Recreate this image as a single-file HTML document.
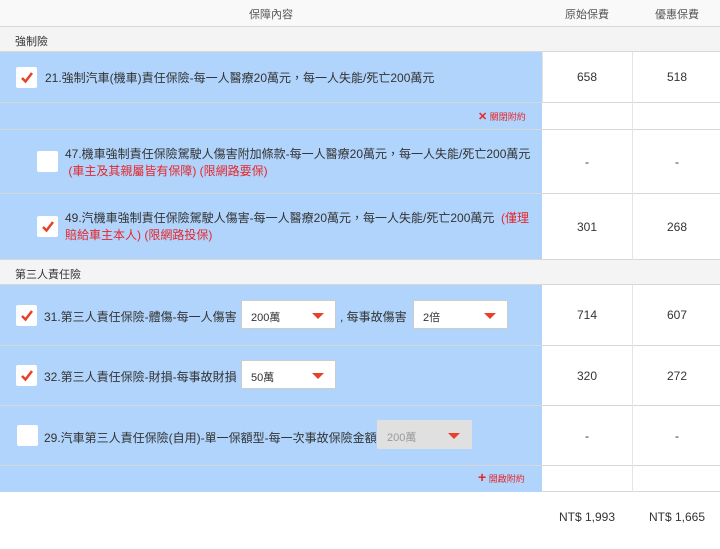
<!DOCTYPE html><html><head><meta charset="utf-8"><style>
*{box-sizing:border-box;margin:0;padding:0}
body{width:720px;height:549px;background:#fff;font-family:"Liberation Sans","Noto Sans CJK TC",sans-serif;font-size:12px;color:#333;position:relative;overflow:hidden}
.a{position:absolute}
.blue{background:#b0d4fb}
.gray{background:#f4f4f4}
.bl{border-bottom:1px solid #d8d8d8}
.num{position:absolute;width:90px;text-align:center}
.cb{position:absolute;width:21px;height:21px;background:#fff;border-radius:2px}
.cb svg{position:absolute;left:4px;top:4px}
.sel{position:absolute;height:29px;background:#fff;border:1px solid #ccc;font-size:11px;padding:8px 0 0 9px}
.sel:after{content:"";position:absolute;right:11px;top:12px;border-left:6px solid transparent;border-right:6px solid transparent;border-top:6px solid #e8402a}
.red{color:#e8252a}
.vl{position:absolute;left:632px;width:1px;background:#e4e4e4}
</style></head><body>
<div class="a gray bl" style="left:0;top:0;width:720px;height:27px;background:#f9f9f9"></div>
<div class="a" style="left:0;top:6px;width:542px;text-align:center;font-size:11px;color:#555">保障內容</div>
<div class="num" style="left:542px;top:6px;font-size:11px;color:#555">原始保費</div>
<div class="num" style="left:632px;top:6px;font-size:11px;color:#555">優惠保費</div>

<div class="a gray bl" style="left:0;top:27px;width:720px;height:25px"></div>
<div class="a" style="left:15px;top:33px;font-size:11px">強制險</div>

<div class="a blue bl" style="left:0;top:52px;width:542px;height:51px"></div>
<div class="a bl" style="left:542px;top:52px;width:178px;height:51px;border-left:1px solid #e4e4e4"></div>
<div class="cb" style="left:16px;top:67px"><svg width="14" height="13"><path d="M2 7l3.5 3.5 6.5-8.5" stroke="#e8402a" stroke-width="2.5" fill="none"/></svg></div>
<div class="a" style="left:45px;top:69px">21.強制汽車(機車)責任保險-每一人醫療20萬元，每一人失能/死亡200萬元</div>
<div class="num" style="left:542px;top:70px">658</div><div class="num" style="left:632px;top:70px">518</div>

<div class="a blue bl" style="left:0;top:103px;width:542px;height:27px"></div>
<div class="a bl" style="left:542px;top:103px;width:178px;height:27px"></div>
<div class="a red" style="left:478px;top:110px;font-size:9px"><b style="font-size:11px">✕</b> 關閉附約</div>

<div class="a blue bl" style="left:0;top:130px;width:542px;height:64px"></div>
<div class="a bl" style="left:542px;top:130px;width:178px;height:64px"></div>
<div class="cb" style="left:37px;top:151px"></div>
<div class="a" style="left:65px;top:146px;line-height:17px">47.機車強制責任保險駕駛人傷害附加條款-每一人醫療20萬元，每一人失能/死亡200萬元<br><span class="red">&nbsp;(車主及其親屬皆有保障) (限網路要保)</span></div>
<div class="num" style="left:542px;top:155px">-</div><div class="num" style="left:632px;top:155px">-</div>

<div class="a blue bl" style="left:0;top:194px;width:542px;height:66px"></div>
<div class="a bl" style="left:542px;top:194px;width:178px;height:66px"></div>
<div class="cb" style="left:37px;top:216px"><svg width="14" height="13"><path d="M2 7l3.5 3.5 6.5-8.5" stroke="#e8402a" stroke-width="2.5" fill="none"/></svg></div>
<div class="a" style="left:65px;top:210px;line-height:17px;width:470px">49.汽機車強制責任保險駕駛人傷害-每一人醫療20萬元，每一人失能/死亡200萬元 <span class="red">&nbsp;(僅理賠給車主本人) (限網路投保)</span></div>
<div class="num" style="left:542px;top:220px">301</div><div class="num" style="left:632px;top:220px">268</div>

<div class="a gray bl" style="left:0;top:260px;width:720px;height:25px"></div>
<div class="a" style="left:15px;top:266px;font-size:11px">第三人責任險</div>

<div class="a blue bl" style="left:0;top:285px;width:542px;height:61px"></div>
<div class="a bl" style="left:542px;top:285px;width:178px;height:61px"></div>
<div class="cb" style="left:16px;top:305px"><svg width="14" height="13"><path d="M2 7l3.5 3.5 6.5-8.5" stroke="#e8402a" stroke-width="2.5" fill="none"/></svg></div>
<div class="a" style="left:44px;top:308px">31.第三人責任保險-體傷-每一人傷害</div>
<div class="sel" style="left:241px;top:300px;width:95px">200萬</div>
<div class="a" style="left:340px;top:308px">, 每事故傷害</div>
<div class="sel" style="left:413px;top:300px;width:95px">2倍</div>
<div class="num" style="left:542px;top:308px">714</div><div class="num" style="left:632px;top:308px">607</div>

<div class="a blue bl" style="left:0;top:346px;width:542px;height:60px"></div>
<div class="a bl" style="left:542px;top:346px;width:178px;height:60px"></div>
<div class="cb" style="left:16px;top:365px"><svg width="14" height="13"><path d="M2 7l3.5 3.5 6.5-8.5" stroke="#e8402a" stroke-width="2.5" fill="none"/></svg></div>
<div class="a" style="left:44px;top:368px">32.第三人責任保險-財損-每事故財損</div>
<div class="sel" style="left:241px;top:360px;width:95px">50萬</div>
<div class="num" style="left:542px;top:369px">320</div><div class="num" style="left:632px;top:369px">272</div>

<div class="a blue bl" style="left:0;top:406px;width:542px;height:60px"></div>
<div class="a bl" style="left:542px;top:406px;width:178px;height:60px"></div>
<div class="cb" style="left:17px;top:425px"></div>
<div class="a" style="left:44px;top:429px">29.汽車第三人責任保險(自用)-單一保額型-每一次事故保險金額</div>
<div class="sel" style="left:377px;top:420px;width:95px;background:#e0e0e0;border-color:#e0e0e0;color:#999">200萬</div>
<div class="num" style="left:542px;top:429px">-</div><div class="num" style="left:632px;top:429px">-</div>

<div class="a blue" style="left:0;top:466px;width:542px;height:26px"></div>
<div class="a bl" style="left:542px;top:466px;width:178px;height:26px"></div>
<div class="a red" style="left:478px;top:472px;font-size:9px"><b style="font-size:14px;line-height:10px">+</b> 開啟附約</div>
<div class="vl" style="top:52px;height:208px"></div>
<div class="vl" style="top:285px;height:207px"></div>

<div class="num" style="left:542px;top:510px;font-size:12px">NT$ 1,993</div>
<div class="num" style="left:632px;top:510px;font-size:12px">NT$ 1,665</div>
</body></html>
